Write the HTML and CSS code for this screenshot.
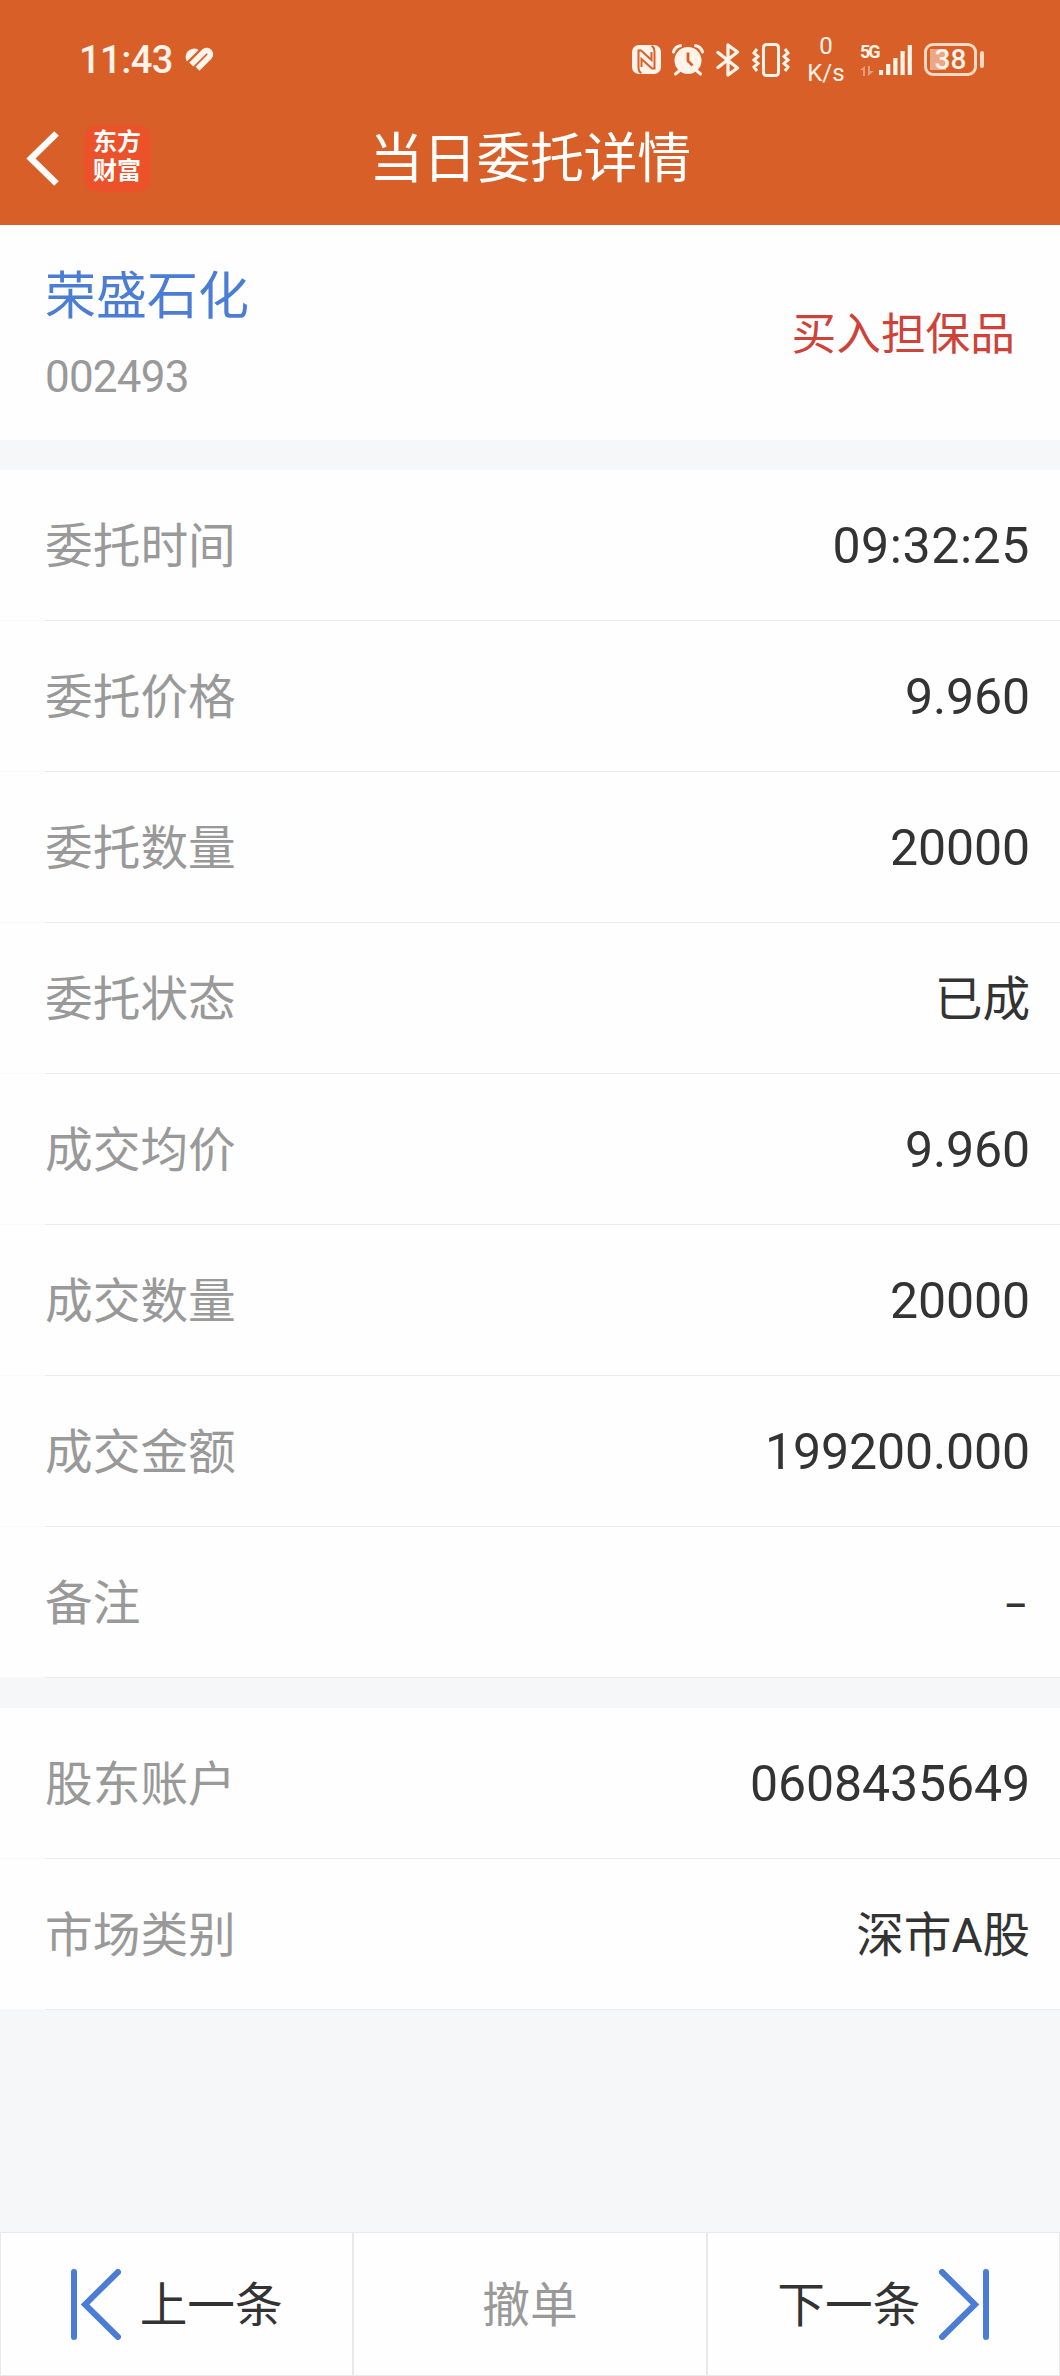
FILE: index.html
```html
<!DOCTYPE html>
<html lang="zh-CN">
<head>
    <meta charset="UTF-8">
    <title>当日委托详情</title>
    <link rel="stylesheet" href="styles.css">
</head>
<body>
<div class="page">
    <header class="header">
        <div class="status-bar">
            <span class="clock">11:43</span>
            <svg class="health" width="32" height="28" viewBox="0 0 32 28">
                <path d="M4 15.500A8.300 8.300 0 0 1 15.500 4Z" fill="currentColor"/>
                <path d="M8.300 18.500L21.400 5.400A3.700 3.700 0 0 1 26.600 10.600L14.500 22.700" fill="none" stroke="currentColor" stroke-width="5.600"/>
            </svg>
            <div class="status-icons">
                <svg class="nfc" width="29" height="29" viewBox="0 0 29 29">
                    <rect width="29" height="29" rx="7" fill="currentColor"/>
                    <path d="M9.500 28Q6.500 27 6.500 22V5.500H9L19.500 15V7" fill="none" stroke="#d86028" stroke-width="2"/>
                    <path d="M19.500 1Q22.500 2 22.500 7V23.500H20L9.500 14V22" fill="none" stroke="#d86028" stroke-width="2"/>
                </svg>
                <svg class="alarm" width="32" height="32" viewBox="0 0 32 32">
                    <circle cx="16" cy="16.500" r="13.500" fill="currentColor"/>
                    <path d="M7 27L3.500 30M25 27L28.500 30M1.500 8Q3 2.500 8.500 1.700M30.500 8Q29 2.500 23.500 1.700" fill="none" stroke="currentColor" stroke-width="3" stroke-linecap="round"/>
                    <path d="M16 8.500V17L20.500 21.500" fill="none" stroke="#d86028" stroke-width="2.800"/>
                </svg>
                <svg class="bluetooth" width="24" height="34" viewBox="0 0 24 34">
                    <path d="M2 9.500L21.500 25L12 32V2L21.500 9L2 24.500" fill="none" stroke="currentColor" stroke-width="3.300" stroke-linejoin="round" stroke-linecap="round"/>
                </svg>
                <svg class="vibrate" width="38" height="34" viewBox="0 0 38 34">
                    <rect x="11.500" y="1.500" width="15" height="31" rx="3" fill="none" stroke="currentColor" stroke-width="3"/>
                    <path d="M5 6L2 10L6 13.500L2 17L6 20.500L2 24L5 28M33 6L36 10L32 13.500L36 17L32 20.500L36 24L33 28" fill="none" stroke="currentColor" stroke-width="3"/>
                </svg>
                <div class="speed"><span>0</span><span>K/s</span></div>
                <div class="signal">
                    <div class="network">
                        <span>5G</span>
                        <svg width="15" height="10" viewBox="0 0 15 10">
                            <path d="M0 4L5 0V10H3V4ZM8 0H10V5H14L8 10Z" fill="currentColor" fill-opacity=".42"/>
                        </svg>
                    </div>
                    <svg width="33" height="32" viewBox="0 0 33 32">
                        <path d="M2 31V26M9.200 31V20M16.400 31V14M23.600 31V7M30.800 31V1" stroke="currentColor" stroke-width="4.200"/>
                    </svg>
                </div>
                <div class="battery"><span>38</span></div>
            </div>
        </div>
        <div class="nav">
            <svg class="back" width="33" height="56" viewBox="0 0 33 56">
                <path d="M30.500 2.500L5 27.500L30.500 52.500" fill="none" stroke="#fff" stroke-width="6.500"/>
            </svg>
            <div class="logo">东方<br>财富</div>
            <h1 class="title">当日委托详情</h1>
        </div>
    </header>

    <section class="stock">
        <div>
            <div class="stock-name">荣盛石化</div>
            <div class="stock-code">002493</div>
        </div>
        <div class="trade-type">买入担保品</div>
    </section>

    <section class="list">
        <div class="row"><span class="label">委托时间</span><span class="value time">09:32:25</span></div>
        <div class="row"><span class="label">委托价格</span><span class="value">9.960</span></div>
        <div class="row"><span class="label">委托数量</span><span class="value">20000</span></div>
        <div class="row"><span class="label">委托状态</span><span class="value cn">已成</span></div>
        <div class="row"><span class="label">成交均价</span><span class="value">9.960</span></div>
        <div class="row"><span class="label">成交数量</span><span class="value">20000</span></div>
        <div class="row"><span class="label">成交金额</span><span class="value">199200.000</span></div>
        <div class="row"><span class="label">备注</span><span class="value empty">–</span></div>
    </section>

    <section class="list">
        <div class="row"><span class="label">股东账户</span><span class="value">0608435649</span></div>
        <div class="row"><span class="label">市场类别</span><span class="value cn">深市A股</span></div>
    </section>

    <footer class="actions">
        <button class="prev">
            <svg width="50" height="71" viewBox="0 0 50 71">
                <path d="M3 3V68M47 3L14 35.500L47 68" fill="none" stroke="#4a7dd3" stroke-width="6" stroke-linecap="round"/>
            </svg>
            <span>上一条</span>
        </button>
        <button class="cancel"><span>撤单</span></button>
        <button class="next">
            <span>下一条</span>
            <svg width="50" height="71" viewBox="0 0 50 71">
                <path d="M47 3V68M3 3L36 35.500L3 68" fill="none" stroke="#4a7dd3" stroke-width="6" stroke-linecap="round"/>
            </svg>
        </button>
    </footer>
</div>
</body>
</html>
```

FILE: styles.css
```css
* {
    box-sizing: border-box;
}

body {
    margin: 0;
    background-color: #f6f7f9;
    font-family: Roboto, "Noto Sans CJK SC", sans-serif;
    color: #333;
}

.page {
    display: flex;
    flex-direction: column;
    height: 2376px;
}

.header {
    height: 225px;
    background-color: #d86028;
    color: #fff3ea;
}

.status-bar {
    display: flex;
    align-items: center;
    height: 92px;
    padding: 27px 76px 0 79px;
}

.clock {
    width: 104px;
    font-size: 38px;
    font-weight: 500;
    line-height: 64px;
    letter-spacing: -0.5px;
}

.status-icons {
    display: flex;
    align-items: center;
    margin-left: auto;
}

.alarm {
    margin-left: 11px;
}

.bluetooth {
    margin-left: 12px;
}

.vibrate {
    margin-left: 12px;
}

.speed {
    display: flex;
    flex-direction: column;
    align-items: center;
    width: 40px;
    margin-left: 16px;
    font-size: 24px;
    line-height: 27px;
}

.signal {
    display: flex;
    align-items: flex-end;
    height: 32px;
    margin-left: 14px;
}

.network {
    display: flex;
    flex-direction: column;
    justify-content: space-between;
    width: 19px;
    height: 32px;
    font-size: 18px;
    font-weight: 700;
    line-height: 16px;
    letter-spacing: -2px;
}

.battery {
    position: relative;
    width: 53px;
    height: 33px;
    margin: 0 7px 0 12px;
    border: 3px solid #fbd9c5;
    border-radius: 9px;
    background: linear-gradient(#eba786, #eba786) 3px 3px / 16px 21px no-repeat;
    font-size: 28px;
    font-weight: 500;
    line-height: 28px;
    text-align: center;
}

.battery::after {
    content: "";
    position: absolute;
    top: 5px;
    right: -10px;
    width: 4px;
    height: 17px;
    border-radius: 2px;
    background-color: #fbd9c5;
}

.nav {
    position: relative;
    display: flex;
    align-items: center;
    height: 133px;
    padding-left: 26px;
}

.logo {
    width: 67px;
    height: 67px;
    margin-left: 25px;
    padding: 3px 0 0 9px;
    border-radius: 13px;
    background-color: #eb5229;
    color: #fff;
    font-size: 24px;
    font-weight: 700;
    line-height: 29px;
}

.title {
    position: absolute;
    left: 0;
    right: 0;
    margin: 0;
    padding-top: 3px;
    color: #fff;
    font-size: 54px;
    font-weight: 400;
    line-height: 80px;
    text-align: center;
    letter-spacing: -0.4px;
}

.stock {
    display: flex;
    justify-content: space-between;
    align-items: center;
    height: 215px;
    padding: 5px 45px 0;
    background-color: #fefefe;
}

.stock-name {
    color: #4a7dd3;
    font-size: 51px;
    line-height: 76px;
}

.stock-code {
    margin-top: 7px;
    color: #999;
    font-size: 44px;
    line-height: 70px;
    letter-spacing: -0.8px;
}

.trade-type {
    color: #ce423a;
    font-size: 44.7px;
    line-height: 66px;
}

.list {
    margin-top: 30px;
    background-color: #fefefe;
}

.row {
    display: flex;
    justify-content: space-between;
    align-items: center;
    height: 151px;
    padding: 0 30px 0 45px;
    background: linear-gradient(to right, #f9f9f9 45px, #ebebeb 45px) bottom / 100% 1px no-repeat;
}

.label {
    padding-bottom: 7px;
    color: #999;
    font-size: 47.7px;
}

.value {
    font-size: 50px;
    letter-spacing: -0.1px;
}

.value.cn {
    padding-bottom: 7px;
    font-size: 47.7px;
}

.value.empty {
    padding: 7px 3px 0 0;
    font-size: 36px;
    font-weight: 500;
}

.value.time {
    letter-spacing: 0.6px;
}

.actions {
    display: grid;
    grid-template-columns: repeat(3, 1fr);
    height: 144px;
    margin-top: auto;
}

.actions button {
    display: flex;
    justify-content: center;
    align-items: center;
    gap: 19px;
    padding: 0;
    border: 1px solid #e9e9e9;
    background-color: #fefefe;
    color: #333;
    font-family: inherit;
    font-size: 47.7px;
}

.actions span {
    padding-bottom: 6px;
}

.actions .cancel {
    color: #999;
}
```
